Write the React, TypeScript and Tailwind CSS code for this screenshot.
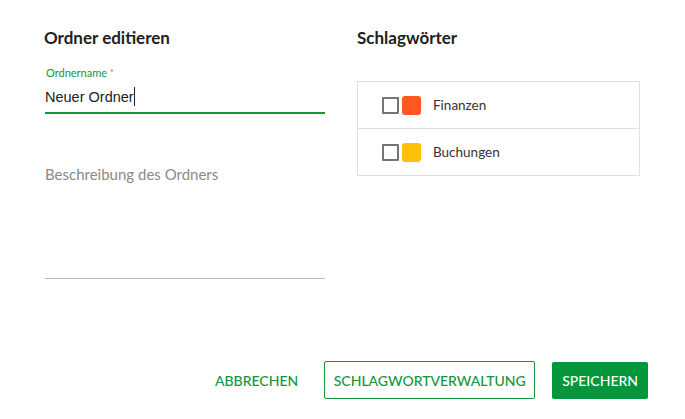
import React from 'react';

const tags = [
  { name: 'Finanzen', color: 'bg-[#ff5722]' },
  { name: 'Buchungen', color: 'bg-[#ffc107]' },
];

export default function App() {
  return (
    <div className="w-[685px] h-[419px] bg-white flex flex-col font-['Lato',sans-serif] text-[#212121]">
      <div className="flex gap-[32px] pl-[45px] pt-[26px]">
        {/* Left column */}
        <div className="w-[280px] flex flex-col">
          <h2 className="text-[17px] leading-[24px] font-bold -ml-px">Ordner editieren</h2>
          <label className="mt-[16px] text-[11px] leading-[14px] text-[#13963c] ml-px">
            Ordnername <span className="text-[#f4511e] text-[9px] align-top">*</span>
          </label>
          <div className="mt-[5px] h-[29px] border-b-2 border-[#13963c] flex items-start">
            <span className="mt-[2px] text-[14.5px] leading-[20px] font-['Liberation_Sans',sans-serif] text-[#222]">Neuer Ordner</span>
            <span className="w-px h-[19px] bg-[#222] mt-[2px]" />
          </div>
          <div className="mt-[48px] h-[117px] border-b border-[#bdbdbd]">
            <span className="text-[15px] leading-[22px] text-[#8a8a8a]">Beschreibung des Ordners</span>
          </div>
        </div>

        {/* Right column */}
        <div className="w-[283px] flex flex-col">
          <h2 className="text-[17px] leading-[24px] font-bold">Schlagwörter</h2>
          <div className="mt-[31px] border border-[#e0e0e0]">
            {tags.map((t, i) => (
              <div
                key={t.name}
                className={`flex items-center pl-[24px] ${i > 0 ? 'border-t border-[#e0e0e0] h-[47px]' : 'h-[46px]'}`}
              >
                <span className="w-[17px] h-[17px] border-2 border-[#757575] rounded-[1px]" />
                <span className={`ml-[3px] w-[19px] h-[19px] rounded-[3px] ${t.color}`} />
                <span className="ml-[12px] text-[13.5px] text-[#333]">{t.name}</span>
              </div>
            ))}
          </div>
        </div>
      </div>

      {/* Actions */}
      <div className="mt-auto mb-[20px] flex justify-end items-center gap-[17px] pr-[37px] text-[14px] font-medium">
        <button className="h-[37px] px-[9px] text-[#13963c] uppercase">Abbrechen</button>
        <button className="h-[38px] px-[8.5px] border border-[#13963c] rounded-[2px] text-[#13963c] uppercase">
          Schlagwortverwaltung
        </button>
        <button className="h-[37px] px-[10px] bg-[#03963a] rounded-[2px] text-white uppercase">Speichern</button>
      </div>
    </div>
  );
}
